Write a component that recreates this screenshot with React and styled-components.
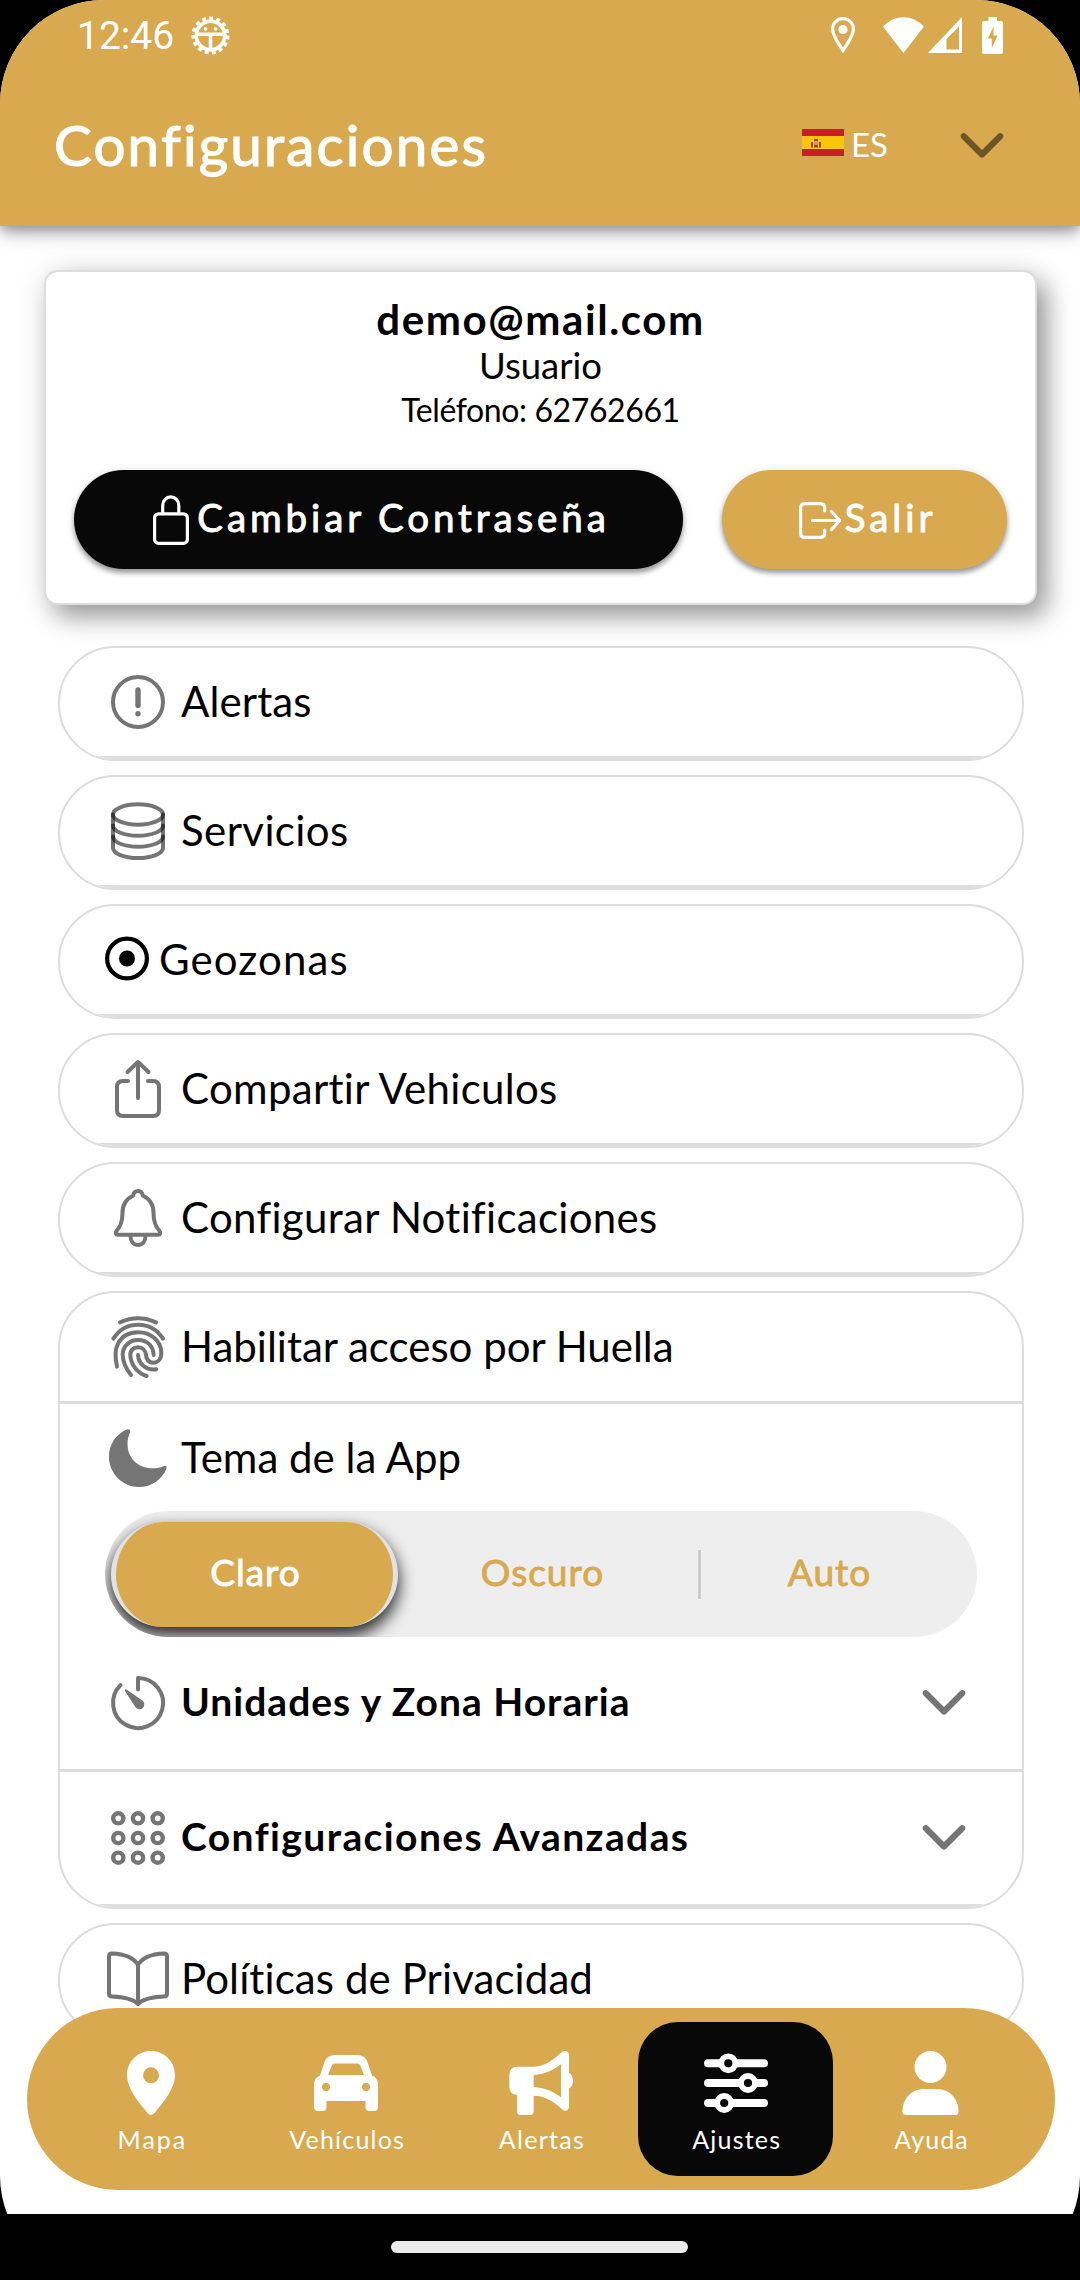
import styled, { createGlobalStyle } from "styled-components";

const gold = "#d8a94f";
const line = "#dddddd";
const gray = "rgba(0, 0, 0, 0.54)";

/* ---------- icons ---------- */

const AlertIcon = () => (
    <RowIcon viewBox="0 0 66 66">
        <circle cx="33" cy="33" r="25" />
        <path d="M33 21V36.5" strokeWidth="5.4" />
        <circle cx="33" cy="44.8" r="2.7" fill={gray} stroke="none" />
    </RowIcon>
);

const ServicesIcon = () => (
    <RowIcon viewBox="0 0 66 66">
        <ellipse cx="33" cy="16.5" rx="25" ry="10.2" />
        <path d="M8 16.5V49.8C8 55.5 19 60 33 60S58 55.5 58 49.8V16.5" />
        <path d="M8 27.5C8 33.2 19 37.7 33 37.7S58 33.2 58 27.5" />
        <path d="M8 38.5C8 44.2 19 48.7 33 48.7S58 44.2 58 38.5" />
    </RowIcon>
);

const GeoIcon = () => (
    <RowIcon viewBox="0 0 44 44" $w={44} $color="#000">
        <circle cx="22" cy="20.5" r="19.9" strokeWidth="4.2" />
        <circle cx="22" cy="20.5" r="8" fill="#000" stroke="none" />
    </RowIcon>
);

const ShareIcon = () => (
    <RowIcon viewBox="0 0 66 66">
        <path d="M33 42V6.5M22.5 16L33 6L43.5 16M23 25H18Q12 25 12 31V54Q12 60 18 60H48Q54 60 54 54V31Q54 25 48 25H43" />
    </RowIcon>
);

const BellIcon = () => (
    <RowIcon viewBox="0 0 66 66">
        <path d="M33 6C30 6 28.8 7.5 28 10.8C21 14 17.5 20 17.5 28C17.5 39 14 43 11.5 46C10 48 10.8 49.8 13 49.8H53C55.2 49.8 56 48 54.5 46C52 43 48.5 39 48.5 28C48.5 20 45 14 38 10.8C37.2 7.5 36 6 33 6ZM25.5 51C25.5 56.5 28.5 60 33 60S40.5 56.5 40.5 51" />
    </RowIcon>
);

const FingerIcon = () => (
    <RowIcon viewBox="15 42 198 198" $color="#757575">
        <g strokeWidth="12">
            <path d="M60 67Q114 42 168 67" />
            <path d="M40 116C58 88 84 74 114 74S171 88 189 116" />
            <path d="M51 200C45 172 44 148 54 131C66 108 88 97 115 97C152 97 183 122 184 158C184 177 174 188 160 188C146 188 139 178 138 165C137 151 127 142 114 142C100 142 90 151 91 167C93 195 112 219 140 228" />
            <path d="M93 225C77 205 68 186 68 163C69 137 89 120 115 120C142 120 160 138 161 165" />
            <path d="M114 165C116 192 138 212 169 208" />
        </g>
    </RowIcon>
);

const MoonIcon = () => (
    <RowIcon viewBox="0 0 66 66">
        <path
            fill="#757575"
            stroke="none"
            d="M25 7.5C26 4.8 23.5 3.5 21 4.8C11 9.5 4 19.5 4 31.5C4 48.5 17.5 62 34 62C46.5 62 57 54.5 61.5 43.5C62.2 41.5 61 40.3 59.3 41C56 42.5 52 43.3 47.5 43.3C33 43.3 22.5 33 22.5 19C22.5 14 23.5 11 25 7.5Z"
        />
    </RowIcon>
);

const TimerIcon = () => (
    <RowIcon viewBox="0 0 66 66">
        <path d="M33 19.5V8A25 25 0 1 1 15.5 15.2" />
        <path d="M19.8 20.8Q19.4 18.8 21.5 19.4L36.2 29.8A4.9 4.9 0 1 1 30 36.5Z" fill="#757575" stroke="none" />
    </RowIcon>
);

const dots = [13.3, 33, 52.7];
const GridIcon = () => (
    <RowIcon viewBox="0 0 66 66">
        {dots.map((y) => dots.map((x) => <circle key={x + "-" + y} cx={x} cy={y} r="5.1" strokeWidth="4.4" />))}
    </RowIcon>
);

const BookIcon = () => (
    <RowIcon viewBox="0 0 66 66" $color="#757575">
        <path d="M33 19C29 12 20 8 7 7.5Q4 7.5 4 10.5V47.5Q4 50.5 7 50.5C19 51 28 53 33 58C38 53 47 51 59 50.5Q62 50.5 62 47.5V10.5Q62 7.5 59 7.5C46 8 37 12 33 19ZM33 19V57" />
    </RowIcon>
);

const Chevron = ({ color }) => (
    <svg width="44" height="28" viewBox="0 0 44 28" fill="none" stroke={color} strokeWidth="6.2" strokeLinecap="round" strokeLinejoin="round">
        <path d="M3.8 4.2L22 22.5L40.2 4.2" />
    </svg>
);

const LockIcon = () => (
    <svg width="36" height="50" viewBox="0 0 36 50" fill="none" stroke="#fff" strokeWidth="3.2">
        <rect x="1.6" y="18.8" width="32.8" height="29.6" rx="4" />
        <path d="M9.7 18.5V10.2A8 8.3 0 0 1 25.8 10.2V18.5" />
    </svg>
);

const ExitIcon = () => (
    <svg width="42" height="37" viewBox="0 0 42 37" fill="none" stroke="#fff" strokeWidth="3.2" strokeLinecap="round" strokeLinejoin="round">
        <path d="M25.7 9V6Q25.7 1.6 21.3 1.6H6Q1.6 1.6 1.6 6V31Q1.6 35.4 6 35.4H21.3Q25.7 35.4 25.7 31V28M13.5 18.5H40.3M32.5 9.5L40.8 18.5L32.5 27.5" />
    </svg>
);

const DebugIcon = () => (
    <svg width="39" height="39" viewBox="0 0 40 40" fill="none" stroke="#fff">
        <circle cx="20" cy="20" r="17" strokeWidth="5" strokeDasharray="3.8 3.32" />
        <circle cx="20" cy="20" r="14.6" strokeWidth="3.8" />
        <path d="M6 18.8H34M20 19V34" strokeWidth="3.6" />
        <circle cx="14.8" cy="13.2" r="1.9" fill="#fff" stroke="none" />
        <circle cx="25.2" cy="13.2" r="1.9" fill="#fff" stroke="none" />
    </svg>
);

const LocationIcon = () => (
    <svg width="24" height="36" viewBox="0 0 24 36" fill="none" stroke="#fff" strokeWidth="3.2">
        <path d="M12 1.6C6.2 1.6 1.6 6 1.6 12C1.6 19.5 7.5 26 12 33.5C16.5 26 22.4 19.5 22.4 12C22.4 6 17.8 1.6 12 1.6Z" />
        <circle cx="12" cy="12.5" r="4.6" fill="#fff" stroke="none" />
    </svg>
);

const WifiIcon = () => (
    <svg width="41" height="36" viewBox="0 0 41 36">
        <path d="M20.5 36L0 9.5C12 -3 29 -3 41 9.5Z" fill="#fff" />
    </svg>
);

const SignalIcon = () => (
    <svg width="34" height="36" viewBox="0 0 34 36">
        <path fillRule="evenodd" d="M34 0V36H0ZM31 9.5L18.5 22V32.5H31Z" fill="#fff" />
    </svg>
);

const BatteryIcon = () => (
    <svg width="21" height="37" viewBox="0 0 21 37">
        <path
            fillRule="evenodd"
            fill="#fff"
            d="M6.5 0H15V4H19Q21 4 21 6V35Q21 37 19 37H2Q0 37 0 35V6Q0 4 2 4H6.5ZM11.5 9.5L6 21.5H9.8V31.5L15.5 18.5H11.5Z"
        />
    </svg>
);

const SpainFlag = () => (
    <svg width="42" height="27" viewBox="0 0 42 27">
        <rect width="42" height="27" fill="#c62026" />
        <rect y="7" width="42" height="13" fill="#ffc40c" />
        <g fill="#9c4a24">
            <rect x="9" y="13" width="2" height="5.5" />
            <rect x="17" y="13" width="2" height="5.5" />
            <rect x="12" y="10" width="4" height="2" />
            <rect x="12" y="15.5" width="4" height="3" />
        </g>
        <rect x="12" y="12.5" width="4" height="3" fill="#c98f7a" />
    </svg>
);

const PinIcon = () => (
    <TabIcon viewBox="0 0 64 64">
        <path fillRule="evenodd" d="M32 0C18.7 0 8 10.7 8 24.2C8 36 17 48.5 29 62.5C30.5 64.3 33.5 64.3 35 62.5C47 48.5 56 36 56 24.2C56 10.7 45.3 0 32 0ZM32 16.3A8 8 0 1 1 32 32.3A8 8 0 1 1 32 16.3Z" />
    </TabIcon>
);

const CarIcon = () => (
    <TabIcon viewBox="0 0 64 64">
        <path
            fillRule="evenodd"
            d="M21 4H43Q51 4 53.5 11L58 24.5Q64 27 64 33V56Q64 60 60 60H55.5Q51.5 60 51.5 56V50H12.5V56Q12.5 60 8.5 60H4Q0 60 0 56V33Q0 27 6 24.5L10.5 11Q13 4 21 4ZM20.5 12.5Q18.8 12.5 18 14L14 24H50L46 14Q45.2 12.5 43.5 12.5ZM12 32A4 4 0 1 0 12 40A4 4 0 1 0 12 32ZM52 32A4 4 0 1 0 52 40A4 4 0 1 0 52 32Z"
        />
    </TabIcon>
);

const MegaphoneIcon = () => (
    <TabIcon viewBox="24 33 192 192">
        <path
            fillRule="evenodd"
            d="M49 80H97C135 80 160 56 182 37Q190 30 197 33.5Q204 37 204 45V98Q216 106 216 123Q216 138 204 146V201Q204 209 197 212Q190 214 183 208C165 190 135 167 98 167V214Q98 225 87 225H58Q48 225 48 214V165Q25 163 25 141V104Q25 80 49 80ZM98 105V141C135 143 160 157 180 172V73C160 88 135 103 98 105Z"
        />
    </TabIcon>
);

const SlidersIcon = () => (
    <TabIcon viewBox="0 0 64 64">
        <path d="M4 12.3H60M4 32H60M4 52H60" stroke="#fff" strokeWidth="8" strokeLinecap="round" />
        <g stroke="#fff" strokeWidth="5.8" fill="#080808">
            <circle cx="24.3" cy="12.3" r="7" />
            <circle cx="44" cy="32" r="7" />
            <circle cx="20.2" cy="52" r="7" />
        </g>
    </TabIcon>
);

const UserIcon = () => (
    <TabIcon viewBox="0 0 64 64">
        <circle cx="31.5" cy="16" r="16" />
        <path d="M25 38H38C50 38 59.500 47 59.500 60.500Q59.500 64 56 64H7Q3.500 64 3.500 60.500C3.500 47 13 38 25 38Z" />
    </TabIcon>
);

/* ---------- page ---------- */

const tabs = [
    { label: "Mapa", icon: <PinIcon />, ls: 2 },
    { label: "Vehículos", icon: <CarIcon />, ls: 1.2 },
    { label: "Alertas", icon: <MegaphoneIcon />, ls: 1.3 },
    { label: "Ajustes", icon: <SlidersIcon />, ls: 1.2, active: true },
    { label: "Ayuda", icon: <UserIcon />, ls: 1.1 },
];

const links = [
    { label: "Alertas", icon: <AlertIcon />, ls: 0.1 },
    { label: "Servicios", icon: <ServicesIcon />, ls: 0.4 },
    { label: "Geozonas", icon: <GeoIcon />, ls: 1.1 },
    { label: "Compartir Vehiculos", icon: <ShareIcon />, ls: 0.3 },
    { label: "Configurar Notificaciones", icon: <BellIcon />, ls: 0.3 },
];

const App = () => {
    return (
        <Screen>
            <GlobalStyle />
            <Header>
                <StatusBar>
                    <Clock>12:46</Clock>
                    <DebugIcon />
                    <StatusIcons>
                        <LocationIcon />
                        <Signals>
                            <WifiIcon />
                            <SignalIcon />
                        </Signals>
                        <BatteryIcon />
                    </StatusIcons>
                </StatusBar>
                <TitleBar>
                    <Title>Configuraciones</Title>
                    <Language>
                        <SpainFlag />
                        <span>ES</span>
                    </Language>
                    <Arrow>
                        <Chevron color="#6c5527" />
                    </Arrow>
                </TitleBar>
            </Header>

            <Main>
                <Card>
                    <Email>demo@mail.com</Email>
                    <Role>Usuario</Role>
                    <Phone>Teléfono: 62762661</Phone>
                    <Actions>
                        <Button $w={609} $bg="#080808">
                            <LockIcon />
                            <span>Cambiar Contraseña</span>
                        </Button>
                        <Button $w={285} $bg={gold} $gap={4}>
                            <ExitIcon />
                            <span>Salir</span>
                        </Button>
                    </Actions>
                </Card>

                <List>
                    {links.map((l) => (
                        <Group key={l.label}>
                            <Row>
                                {l.icon}
                                <Label $ls={l.ls}>{l.label}</Label>
                            </Row>
                        </Group>
                    ))}
                    <Group>
                        <Row>
                            <FingerIcon />
                            <Label>Habilitar acceso por Huella</Label>
                        </Row>
                        <Row $h={107} $plain>
                            <MoonIcon />
                            <Label>Tema de la App</Label>
                        </Row>
                        <Segments>
                            <Segment $on>Claro</Segment>
                            <Segment>Oscuro</Segment>
                            <Separator />
                            <Segment>Auto</Segment>
                        </Segments>
                        <Row $h={135}>
                            <TimerIcon />
                            <BoldLabel $ls={1}>Unidades y Zona Horaria</BoldLabel>
                            <Chevron color="#757575" />
                        </Row>
                        <Row $h={135}>
                            <GridIcon />
                            <BoldLabel $ls={1.4}>Configuraciones Avanzadas</BoldLabel>
                            <Chevron color="#757575" />
                        </Row>
                    </Group>
                    <Group>
                        <Row>
                            <BookIcon />
                            <Label $ls={0.1}>Políticas de Privacidad</Label>
                        </Row>
                    </Group>
                </List>
            </Main>

            <TabBar>
                {tabs.map((t) => (
                    <Tab key={t.label} $active={t.active}>
                        {t.icon}
                        <TabLabel $ls={t.ls}>{t.label}</TabLabel>
                    </Tab>
                ))}
            </TabBar>

            <SystemBar>
                <Handle />
            </SystemBar>
        </Screen>
    );
};

const GlobalStyle = createGlobalStyle`
  body {
    margin: 0;
    background: #000;
    font-family: Lato, "Open Sans", sans-serif;
    color: #000;
  }
  * {
    box-sizing: border-box;
  }
  svg {
    display: block;
    flex: none;
  }
`;

const Screen = styled.div`
  position: relative;
  display: flex;
  flex-direction: column;
  width: 1080px;
  height: 2280px;
  overflow: hidden;
  border-radius: 104px;
  background: linear-gradient(#fff 2214px, #000 2214px);
`;

const Header = styled.header`
  height: 226px;
  flex: none;
  background: ${gold};
  color: #fff;
  z-index: 1;
  box-shadow: 0 5px 10px -2px rgba(0, 0, 0, 0.28), 0 10px 13px rgba(0, 0, 0, 0.14), 0 3px 26px rgba(0, 0, 0, 0.12);
`;

const StatusBar = styled.div`
  display: flex;
  align-items: center;
  height: 70px;
  padding: 0 77px 0 77px;
`;

const Clock = styled.div`
  font-family: Roboto, sans-serif;
  font-size: 39px;
  padding-top: 2px;
  margin-right: 17px;
`;

const StatusIcons = styled.div`
  display: flex;
  align-items: center;
  margin-left: auto;
  gap: 20px;
`;

const Signals = styled.div`
  display: flex;
  gap: 4px;
  margin-left: 8px;
`;

const TitleBar = styled.div`
  display: flex;
  align-items: center;
  height: 156px;
  padding: 0 76px 11px 54px;
`;

const Title = styled.h1`
  flex: 1;
  margin: 0;
  padding-top: 2px;
  font-size: 56.5px;
  font-weight: 400;
  letter-spacing: 2.2px;
  -webkit-text-stroke: 1.2px #fff;
`;

const Language = styled.div`
  display: flex;
  align-items: center;
  gap: 7px;
  font-size: 33px;
  margin-right: 72px;
  span {
    padding-top: 2px;
  }
`;

const Arrow = styled.div`
  margin-top: 6px;
`;

const Main = styled.main`
  flex: 1;
  min-height: 0;
  padding: 44px 43px 0 44px;
`;

const Card = styled.section`
  height: 335px;
  padding: 21px 28px 0;
  border: 2px solid ${line};
  border-radius: 14px;
  background: #fff;
  text-align: center;
  box-shadow: 10px 12px 26px rgba(0, 0, 0, 0.38), 0 0 34px rgba(0, 0, 0, 0.08);
`;

const Email = styled.div`
  padding-top: 1px;
  font-size: 42px;
  line-height: 50px;
  font-weight: 700;
  letter-spacing: 1.6px;
`;

const Role = styled.div`
  font-size: 36.5px;
  line-height: 43px;
`;

const Phone = styled.div`
  font-size: 32px;
  line-height: 45px;
  letter-spacing: -0.4px;
`;

const Actions = styled.div`
  display: flex;
  gap: 39px;
  margin-top: 38px;
`;

const Button = styled.button`
  display: flex;
  align-items: center;
  justify-content: center;
  gap: ${(p) => p.$gap || 8}px;
  width: ${(p) => p.$w}px;
  height: 99px;
  padding: 1px 0 0 6px;
  border: 0;
  border-radius: 50px;
  background: ${(p) => p.$bg};
  color: #fff;
  font: 400 38.5px Lato, sans-serif;
  letter-spacing: 3.9px;
  -webkit-text-stroke: 0.9px #fff;
  box-shadow: 0 4px 5px rgba(0, 0, 0, 0.35), 0 1px 10px rgba(0, 0, 0, 0.12);
  span {
    padding-bottom: 7px;
  }
`;

const List = styled.div`
  display: flex;
  flex-direction: column;
  gap: 14px;
  width: 966px;
  margin: 41px 0 0 14px;
`;

const Group = styled.section`
  border: 2px solid ${line};
  border-radius: 57px;
  overflow: hidden;
  background: #fff;
`;

const Row = styled.div`
  display: flex;
  align-items: center;
  gap: 10px;
  height: ${(p) => p.$h || 111}px;
  padding: 0 56px 0 45px;
  border-bottom: ${(p) => (p.$plain ? 0 : 3)}px solid ${line};
`;

const RowIcon = styled.svg`
  width: ${(p) => p.$w || 66}px;
  height: ${(p) => p.$w || 66}px;
  overflow: visible;
  fill: none;
  stroke: ${(p) => p.$color || gray};
  stroke-width: 4;
  stroke-linecap: round;
  stroke-linejoin: round;
`;

const Label = styled.div`
  flex: 1;
  padding-bottom: 2px;
  font-size: 42px;
  letter-spacing: ${(p) => p.$ls || 0}px;
`;

const BoldLabel = styled(Label)`
  padding-bottom: 5px;
  font-size: 39px;
  font-weight: 700;
`;

const Segments = styled.div`
  display: flex;
  align-items: center;
  width: 872px;
  height: 126px;
  margin-left: 45px;
  padding: 0 5px 0 6px;
  border-radius: 63px;
  overflow: hidden;
  background: #eeeeee;
`;

const Segment = styled.div`
  width: 287px;
  height: 105px;
  padding-left: 2px;
  border: solid ${(p) => (p.$on ? "#e2e2e2" : "transparent")};
  border-width: 0 5px;
  border-radius: 53px;
  background: ${(p) => (p.$on ? gold : "none")};
  color: ${(p) => (p.$on ? "#fff" : gold)};
  box-shadow: ${(p) => (p.$on ? "0 8px 16px 1px rgba(0, 0, 0, 0.82)" : "none")};
  font-size: 37px;
  letter-spacing: 1px;
  line-height: 99px;
  text-align: center;
  -webkit-text-stroke: 0.9px ${(p) => (p.$on ? "#fff" : gold)};
`;

const Separator = styled.div`
  width: 3px;
  height: 49px;
  margin: 0 -16px 0 13px;
  background: #cccccc;
`;

const TabBar = styled.nav`
  position: absolute;
  left: 27px;
  bottom: 90px;
  display: flex;
  align-items: center;
  width: 1028px;
  height: 182px;
  padding: 0 27px;
  border-radius: 91px;
  background: ${gold};
`;

const Tab = styled.div`
  display: flex;
  flex-direction: column;
  align-items: center;
  gap: 8px;
  width: 195px;
  height: 154px;
  padding-top: 29px;
  border-radius: 40px;
  background: ${(p) => (p.$active ? "#080808" : "none")};
`;

const TabIcon = styled.svg`
  width: 64px;
  height: 64px;
  fill: #fff;
`;

const TabLabel = styled.div`
  padding-left: 2px;
  color: #fff;
  font-size: 25px;
  line-height: 32px;
  letter-spacing: ${(p) => p.$ls}px;
`;

const SystemBar = styled.footer`
  display: flex;
  justify-content: center;
  flex: none;
  height: 66px;
  padding: 27px 1px 0 0;
  background: #000;
`;

const Handle = styled.div`
  width: 297px;
  height: 12px;
  border-radius: 6px;
  background: #ebebeb;
`;

export default App;
